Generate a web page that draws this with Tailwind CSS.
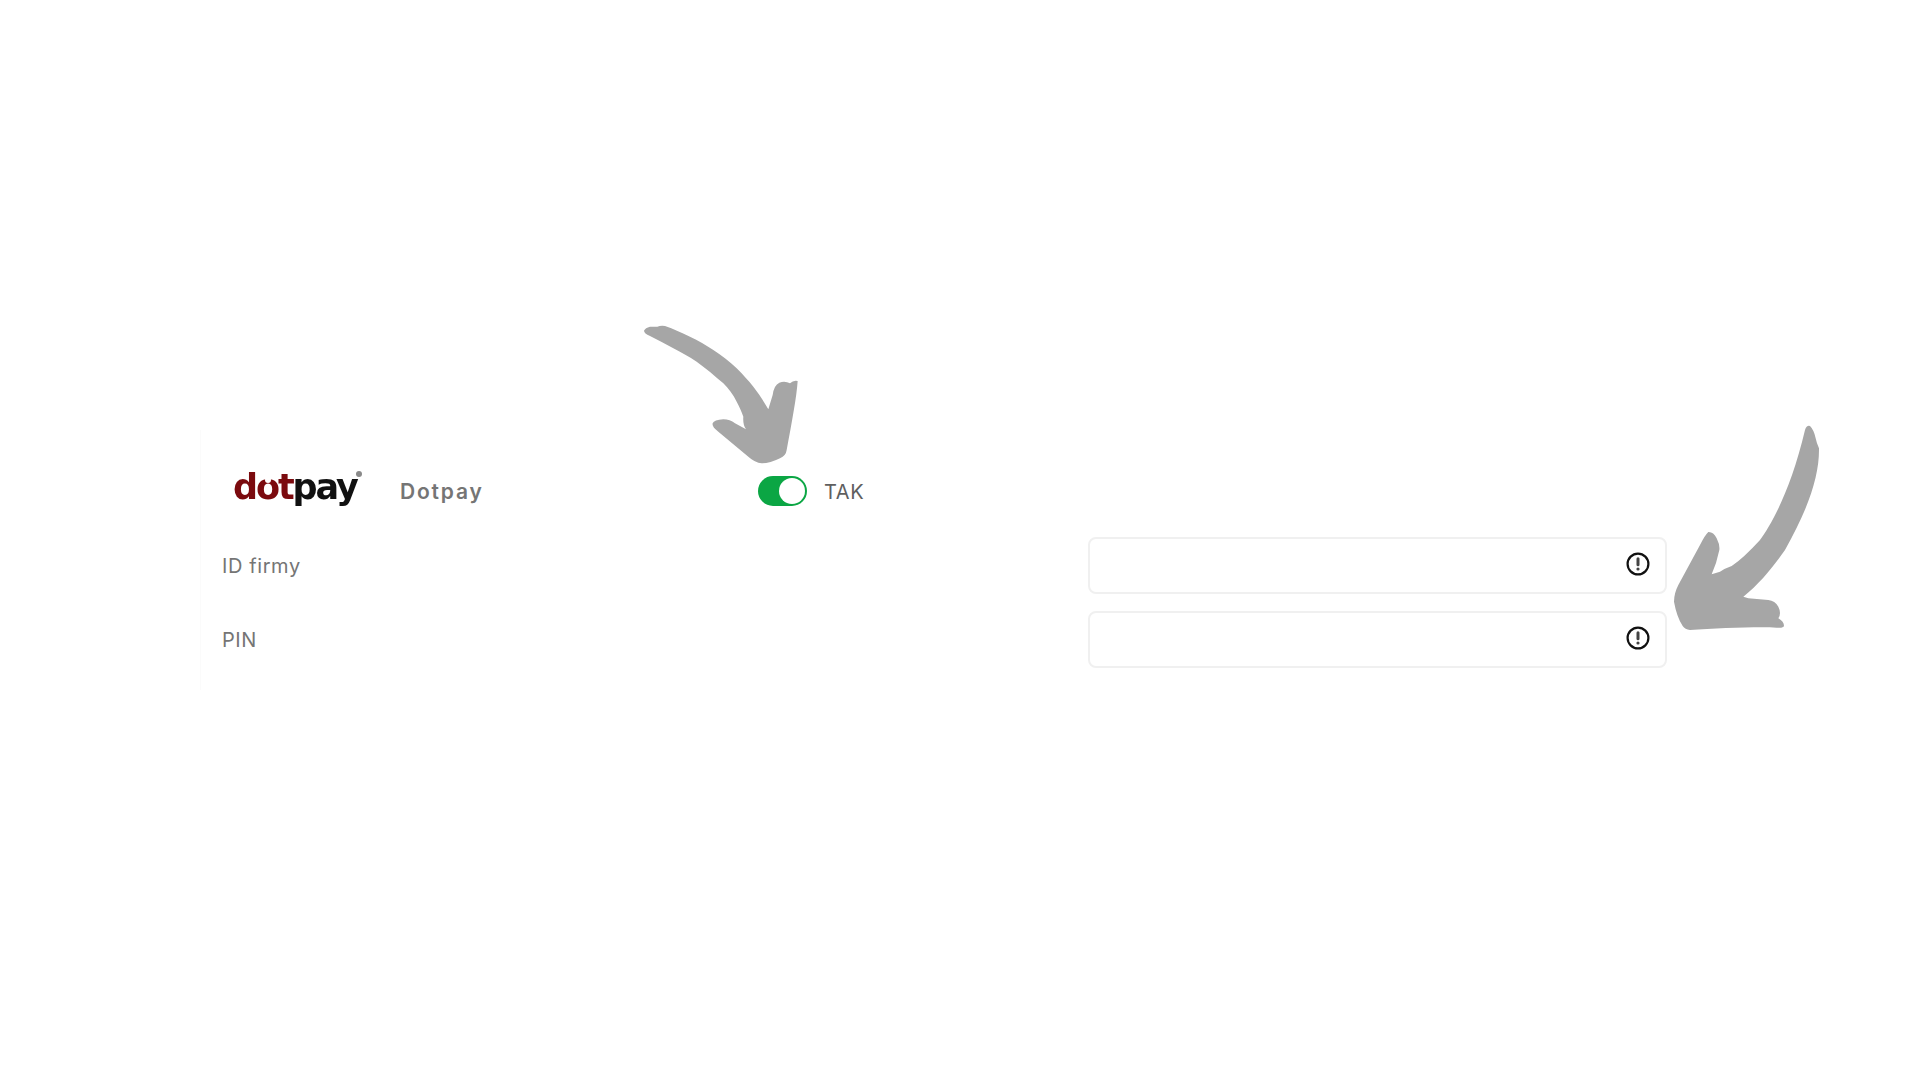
<!DOCTYPE html>
<html lang="pl">
<head>
<meta charset="utf-8">
<title>Dotpay</title>
<script src="https://cdn.jsdelivr.net/npm/@tailwindcss/browser@4"></script>
</head>
<body class="bg-white">
<div class="relative w-[1920px] h-[1080px] overflow-hidden bg-white font-['Inter','Liberation_Sans',sans-serif] text-[20px] tracking-[0.6px] text-[#757575]">
  <div class="ml-[200px] pt-[430px] w-[1480px]">
    <div class="border-l border-[#fbfbfb] h-[260px] pl-[21px] pt-[31px]">
      <div class="flex items-center h-[60px]">
        <div class="relative w-[178px] h-[60px] pl-[11px] pb-[7px] flex items-center">
          <span class="font-['DejaVu_Sans',sans-serif] font-bold text-[35px] leading-none tracking-[-2.1px] blur-[0.4px]"><span class="text-[#7b0a0e]">dot</span><span class="text-[#111111]">pay</span></span>
          <span class="absolute left-[43px] top-[16px] w-[6px] h-[6px] rounded-full bg-white"></span>
          <span class="absolute left-[134px] top-[10px] w-[6px] h-[6px] rounded-full bg-[#8a8a8a]"></span>
        </div>
        <span class="font-semibold text-[21px] tracking-[1.8px] w-[358px] pt-[1px]">Dotpay</span>
        <span class="relative w-[49px] h-[30px] rounded-full bg-[#0ba644] mr-[17px] shrink-0">
          <span class="absolute right-[2px] top-[2px] w-[26px] h-[26px] rounded-full bg-white"></span>
        </span>
        <span class="text-[#5f5f5f] pt-[1px]">TAK</span>
      </div>
      <div class="flex items-center justify-between h-[57px] mt-[16px] pr-[13px]">
        <span class="pt-[1px]">ID firmy</span>
        <div class="w-[579px] h-[57px] rounded-[8px] border-2 border-[#f0f0f0] flex items-center justify-end pr-[15px] pb-[3px]">
          <svg class="w-[24px] h-[24px]" viewBox="0 0 24 24" fill="none"><circle cx="12" cy="12" r="10.4" stroke="#111" stroke-width="2.2"/><path d="M12 6.8v6" stroke="#444" stroke-width="3" stroke-linecap="round"/><circle cx="12" cy="17" r="1.6" fill="#444"/></svg>
        </div>
      </div>
      <div class="flex items-center justify-between h-[57px] mt-[17px] pr-[13px]">
        <span class="pt-[1px]">PIN</span>
        <div class="w-[579px] h-[57px] rounded-[8px] border-2 border-[#f0f0f0] flex items-center justify-end pr-[15px] pb-[3px]">
          <svg class="w-[24px] h-[24px]" viewBox="0 0 24 24" fill="none"><circle cx="12" cy="12" r="10.4" stroke="#111" stroke-width="2.2"/><path d="M12 6.8v6" stroke="#444" stroke-width="3" stroke-linecap="round"/><circle cx="12" cy="17" r="1.6" fill="#444"/></svg>
        </div>
      </div>
    </div>
  </div>

  <svg class="absolute left-[620px] top-[310px] w-[270px] h-[220px]" viewBox="0 0 810 660" fill="#a6a6a6">
    <path d="M72 62 Q76 53 90 50 L112 50 Q122 46 135 48 C160 57 185 68 210 80 C235 92 258 105 280 120 C305 136 330 155 350 175 C370 195 385 212 400 230 C417 252 432 275 445 298 L458 255 Q462 225 478 218 Q495 212 510 220 Q520 210 533 213 C530 260 515 340 500 420 Q498 437 480 445 Q450 460 425 460 Q405 458 385 440 L295 365 Q275 350 278 340 Q282 330 310 328 Q330 328 345 340 L378 358 Q368 345 370 320 C365 305 358 290 350 275 C340 255 325 235 310 220 C285 198 258 175 230 155 C207 140 185 128 160 115 C137 102 113 90 90 78 Q72 70 72 62Z"/>
  </svg>
  <svg class="absolute left-[1600px] top-[410px] w-[240px] h-[270px]" viewBox="0 0 720 810" fill="#a6a6a6">
    <path d="M615 60 Q620 45 630 48 Q642 60 647 85 Q650 100 657 115 C658 200 625 295 555 420 C520 470 480 520 430 560 L445 565 L505 570 Q525 572 535 590 Q545 610 535 625 Q552 635 552 648 Q550 655 530 653 C470 650 350 655 270 660 Q255 658 248 648 Q230 620 222 575 Q222 550 235 525 L300 405 Q315 375 325 366 Q340 365 350 385 Q360 405 358 420 Q350 460 335 493 L360 485 Q375 475 395 468 Q430 445 480 390 C520 335 575 230 615 60Z"/>
  </svg>
</div>
</body>
</html>
